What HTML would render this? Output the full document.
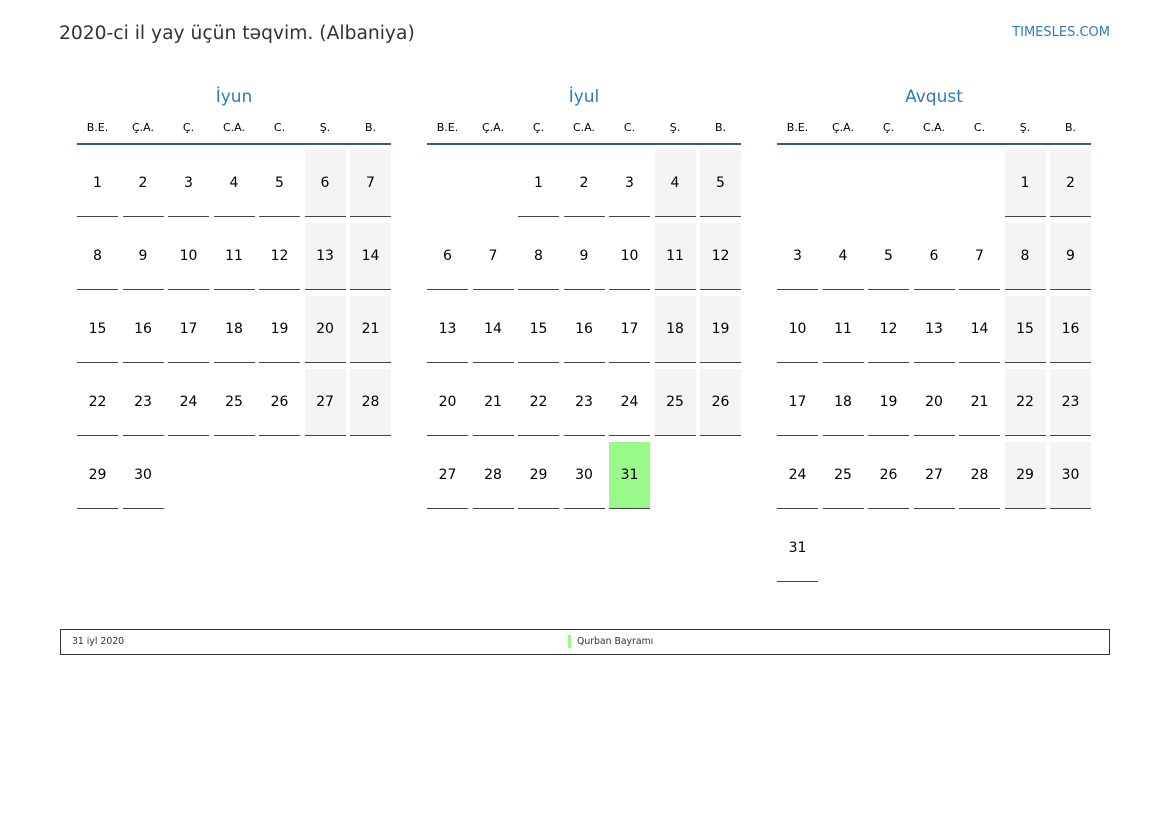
<!DOCTYPE html>
<html><head><meta charset="utf-8"><style>
*{margin:0;padding:0;box-sizing:border-box}
body{width:1169px;height:827px;background:#fff;font-family:"DejaVu Sans","Liberation Sans",sans-serif;position:relative;overflow:hidden;color:#000}
.title{position:absolute;left:59px;top:23px;font-size:18.7px;color:#333}
.site{position:absolute;right:59px;top:25px;font-size:13px;color:#2f7bbf}
.m{position:absolute;top:86px;width:314px}
.mn{text-align:center;font-size:17px;color:#2f7bbf;height:22px;line-height:22px}
.dn{display:grid;grid-template-columns:repeat(7,41px);column-gap:4.5px;margin-top:13px;font-size:11px;text-align:center;height:22px;line-height:13px}
.hl{height:2px;background:#3d5a8a}
.g{display:grid;grid-template-columns:repeat(7,41px);column-gap:4.5px;row-gap:6px;margin-top:5px}
.g div{height:67px;line-height:66px;text-align:center;font-size:14px}
.g .d{border-bottom:1.5px solid #444}
.g .w{background:#f4f4f4}
.g .h{background:#99f98a}
.foot{position:absolute;left:60px;top:629px;width:1050px;height:26px;border:1px solid #333;font-size:9.3px;color:#333}
</style></head><body>
<div class="title">2020-ci il yay üçün təqvim. (Albaniya)</div>
<div class="site">TIMESLES.COM</div>

<div class="m" style="left:77px">
<div class="mn">İyun</div>
<div class="dn"><span>B.E.</span><span>Ç.A.</span><span>Ç.</span><span>C.A.</span><span>C.</span><span>Ş.</span><span>B.</span></div>
<div class="hl"></div>
<div class="g">
<div class="d">1</div><div class="d">2</div><div class="d">3</div><div class="d">4</div><div class="d">5</div><div class="d w">6</div><div class="d w">7</div>
<div class="d">8</div><div class="d">9</div><div class="d">10</div><div class="d">11</div><div class="d">12</div><div class="d w">13</div><div class="d w">14</div>
<div class="d">15</div><div class="d">16</div><div class="d">17</div><div class="d">18</div><div class="d">19</div><div class="d w">20</div><div class="d w">21</div>
<div class="d">22</div><div class="d">23</div><div class="d">24</div><div class="d">25</div><div class="d">26</div><div class="d w">27</div><div class="d w">28</div>
<div class="d">29</div><div class="d">30</div>
</div></div>

<div class="m" style="left:427px">
<div class="mn">İyul</div>
<div class="dn"><span>B.E.</span><span>Ç.A.</span><span>Ç.</span><span>C.A.</span><span>C.</span><span>Ş.</span><span>B.</span></div>
<div class="hl"></div>
<div class="g">
<div></div><div></div><div class="d">1</div><div class="d">2</div><div class="d">3</div><div class="d w">4</div><div class="d w">5</div>
<div class="d">6</div><div class="d">7</div><div class="d">8</div><div class="d">9</div><div class="d">10</div><div class="d w">11</div><div class="d w">12</div>
<div class="d">13</div><div class="d">14</div><div class="d">15</div><div class="d">16</div><div class="d">17</div><div class="d w">18</div><div class="d w">19</div>
<div class="d">20</div><div class="d">21</div><div class="d">22</div><div class="d">23</div><div class="d">24</div><div class="d w">25</div><div class="d w">26</div>
<div class="d">27</div><div class="d">28</div><div class="d">29</div><div class="d">30</div><div class="d h">31</div>
</div></div>

<div class="m" style="left:777px">
<div class="mn">Avqust</div>
<div class="dn"><span>B.E.</span><span>Ç.A.</span><span>Ç.</span><span>C.A.</span><span>C.</span><span>Ş.</span><span>B.</span></div>
<div class="hl"></div>
<div class="g">
<div></div><div></div><div></div><div></div><div></div><div class="d w">1</div><div class="d w">2</div>
<div class="d">3</div><div class="d">4</div><div class="d">5</div><div class="d">6</div><div class="d">7</div><div class="d w">8</div><div class="d w">9</div>
<div class="d">10</div><div class="d">11</div><div class="d">12</div><div class="d">13</div><div class="d">14</div><div class="d w">15</div><div class="d w">16</div>
<div class="d">17</div><div class="d">18</div><div class="d">19</div><div class="d">20</div><div class="d">21</div><div class="d w">22</div><div class="d w">23</div>
<div class="d">24</div><div class="d">25</div><div class="d">26</div><div class="d">27</div><div class="d">28</div><div class="d w">29</div><div class="d w">30</div>
<div class="d">31</div>
</div></div>

<div class="foot">
<span style="position:absolute;left:11px;top:6px">31 iyl 2020</span>
<span style="position:absolute;left:507px;top:5px;width:3px;height:13px;background:#99f98a"></span>
<span style="position:absolute;left:516px;top:6px">Qurban Bayramı</span>
</div>
</body></html>
